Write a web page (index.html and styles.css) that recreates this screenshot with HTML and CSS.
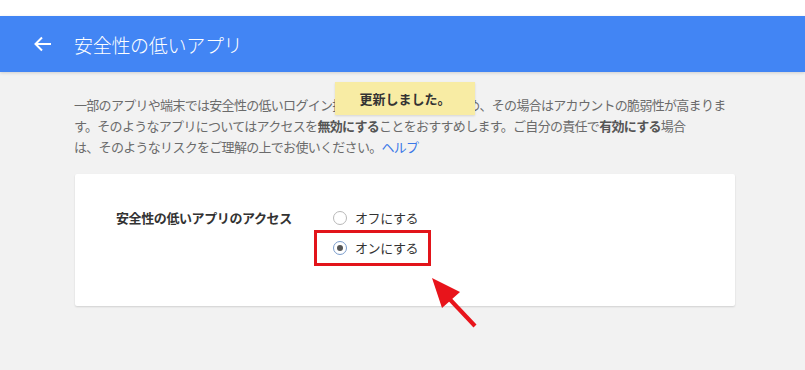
FILE: index.html
```html
<!DOCTYPE HTML>
<html>
	<head>
	<meta charset="utf-8">
	<title>安全性の低いアプリ</title>
	<link rel="stylesheet" href="styles.css">
	</head>
	<body>
		<div class="topbar"></div>
		<div class="header">
			<svg class="back" width="18" height="16" viewBox="0 0 18 16">
				<path d="M17 8H2M8 1.5L1.5 8L8 14.5" fill="none" stroke="#fff" stroke-width="2"/>
			</svg>
			<h1 class="title">安全性の低いアプリ</h1>
		</div>
		<div class="main">
			<p class="intro">一部のアプリや端末では安全性の低いログイン技術が使用されているため、その場合はアカウントの脆弱性が高まります。そのようなアプリについてはアクセスを<b>無効にする</b>ことをおすすめします。ご自分の責任で<b>有効にする</b>場合<br>は、そのようなリスクをご理解の上でお使いください。<a href="#">ヘルプ</a></p>

			<div class="card">
				<div class="setting">
					<div class="setting-label">安全性の低いアプリのアクセス</div>
					<div class="options">
						<label class="option"><span class="radio"></span>オフにする</label>
						<label class="option picked"><span class="radio on"></span>オンにする</label>
					</div>
				</div>
			</div>

			<div class="toast">更新しました。</div>

			<svg class="pointer" width="60" height="60" viewBox="0 0 60 60">
				<polygon points="20.5,18.5 54.5,54.5 51.5,57.5 17.5,21.5" fill="#e8141b"/>
				<polygon points="10,8 38,22 20,38" fill="#e8141b"/>
			</svg>
		</div>
	</body>
</html>
```

FILE: styles.css
```css
html, body {
	min-height: 100%;
}
body {
	margin: 0;
	min-height: 100vh;
	background: #f2f2f2;
	font-family: "Noto Sans CJK JP", "Noto Sans", sans-serif;
	color: #666;
}

.topbar {
	height: 16px;
	background: #fff;
}

.header {
	height: 56px;
	background: #4285f4;
	display: flex;
	align-items: center;
	box-shadow: 0 1px 3px rgba(0,0,0,.15);
}
.back {
	margin-left: 34px;
	margin-right: 22px;
}
.title {
	margin: 0;
	font-size: 19px;
	font-weight: 300;
	color: #fff;
	letter-spacing: -0.3px;
}

.main {
	position: relative;
	padding: 22px 0 64px 74px;
}

.intro {
	margin: 0;
	width: 660px;
	font-size: 13px;
	line-height: 21px;
	letter-spacing: -0.7px;
	color: #6b6b6b;
}
.intro b {
	color: #555;
}
.intro a {
	color: #3b78e7;
	text-decoration: none;
}

.card {
	margin-top: 17px;
	margin-left: 1px;
	width: 660px;
	height: 132px;
	background: #fff;
	box-shadow: 0 1px 2px rgba(0,0,0,.14);
	border-radius: 2px;
	box-sizing: border-box;
	padding: 33px 0 0 41px;
}

.setting {
	display: flex;
}
.setting-label {
	width: 201px;
	font-size: 13px;
	font-weight: bold;
	color: #333;
	line-height: 22px;
	letter-spacing: -0.4px;
}
.options {
	display: flex;
	flex-direction: column;
	gap: 8px;
}
.option {
	display: flex;
	align-items: center;
	font-size: 13px;
	color: #333;
	line-height: 22px;
	padding: 0 0 0 16px;
	letter-spacing: -0.4px;
}
.option.picked {
	outline: 3px solid #e2141a;
	padding: 4px 10px 4px 16px;
	margin-top: -4px;
	width: fit-content;
}
.radio {
	width: 14px;
	height: 14px;
	border: 1px solid #b8b8b8;
	border-radius: 50%;
	background: #fff;
	margin-right: 8px;
	box-sizing: border-box;
	display: flex;
	align-items: center;
	justify-content: center;
}
.radio.on {
	border-color: #7a9ccc;
}
.radio.on::after {
	content: "";
	width: 6px;
	height: 6px;
	border-radius: 50%;
	background: #555;
}

.toast {
	position: absolute;
	left: 335px;
	top: 10px;
	width: 140px;
	height: 33px;
	background: #f8eca4;
	box-shadow: 0 1px 2px rgba(0,0,0,.12);
	font-size: 13px;
	font-weight: bold;
	color: #333;
	text-align: center;
	line-height: 33px;
}

.pointer {
	position: absolute;
	left: 422px;
	top: 198px;
	z-index: 2;
}
```
